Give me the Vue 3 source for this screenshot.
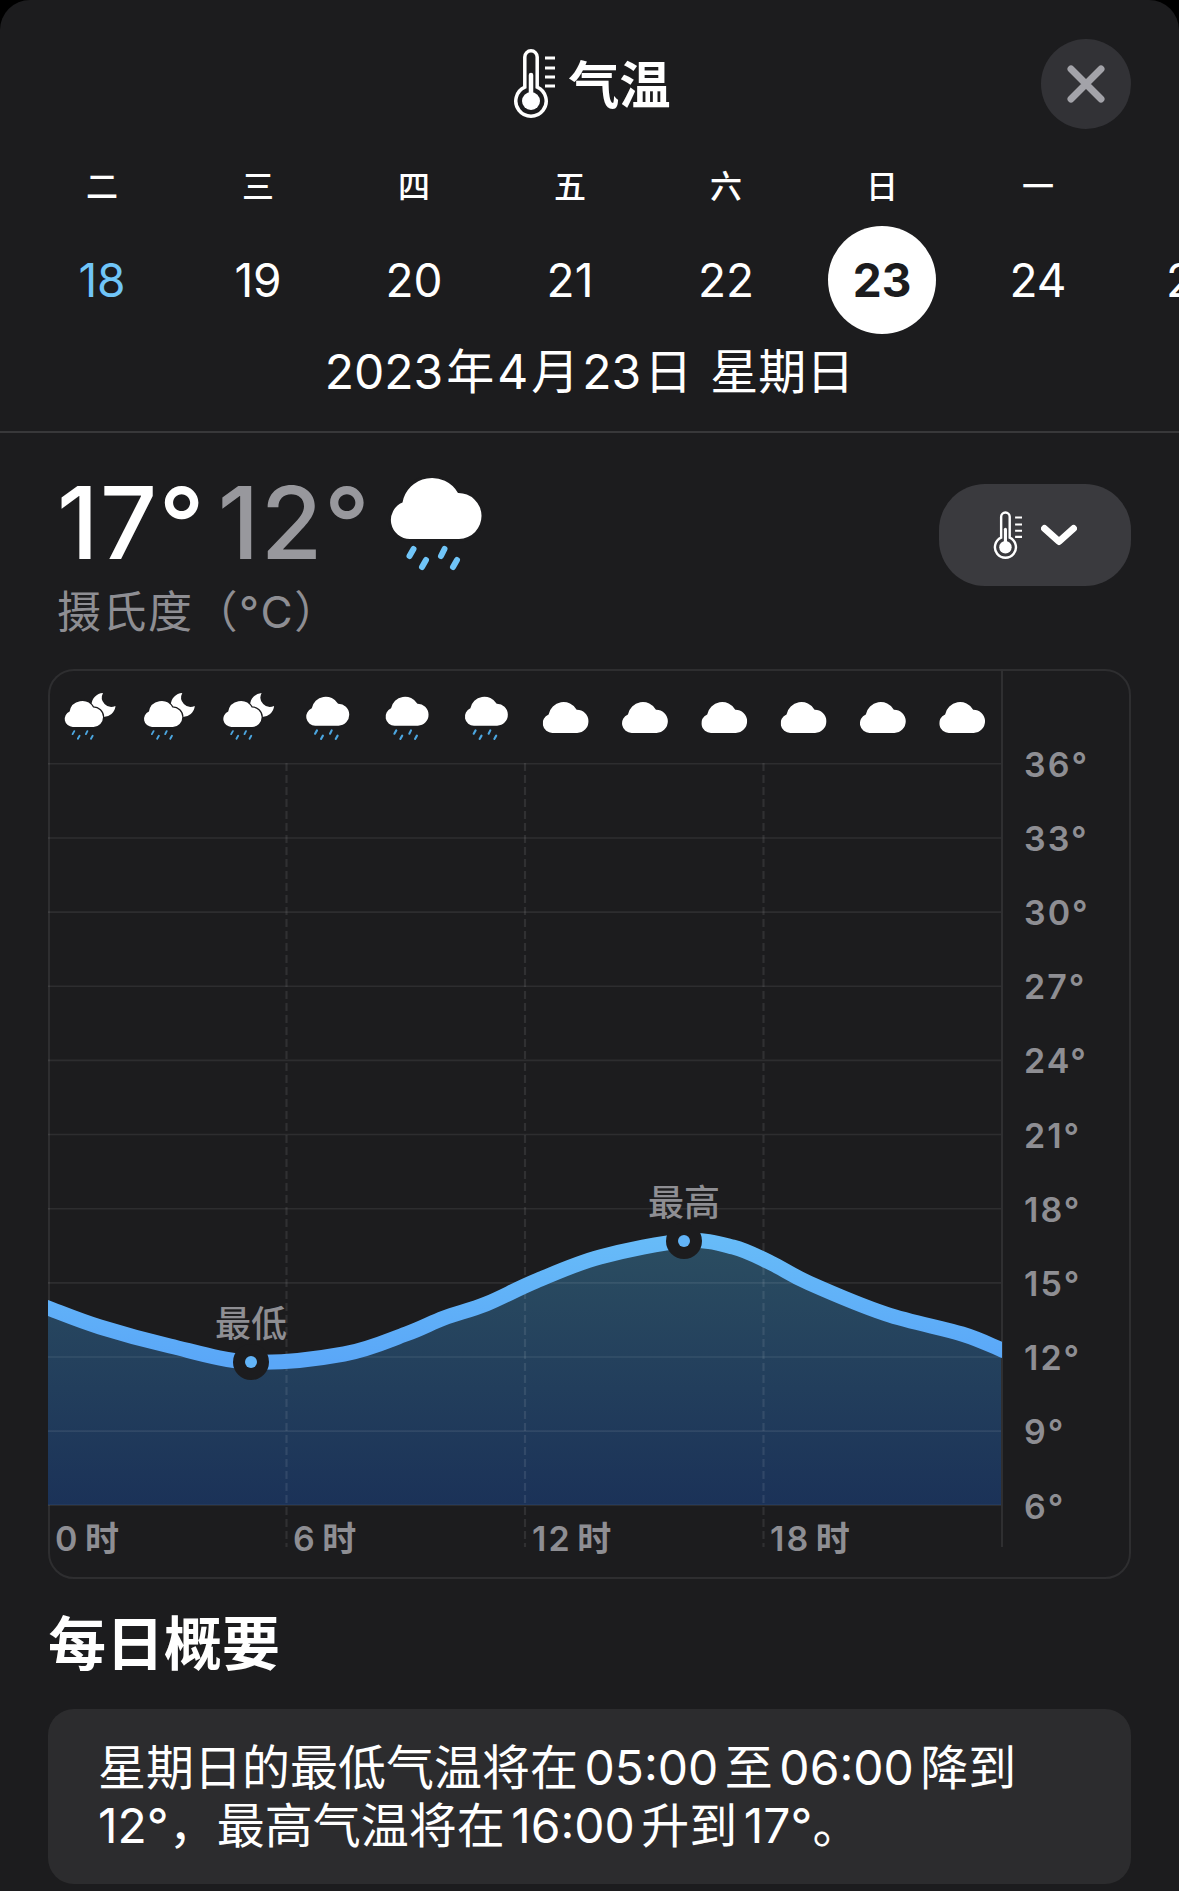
<template>
  <div class="sheet">
    <svg class="defs" width="0" height="0" aria-hidden="true">
      <defs>
        <symbol id="thermo" viewBox="0 0 42 70">
          <path d="M11.8 38.1V8a6.2 6.2 0 0 1 12.4 0V38.1A15.2 15.2 0 1 1 11.8 38.1Z" fill="none" stroke="#fff" stroke-width="3.5" />
          <path d="M18 26V52" stroke="#fff" stroke-width="4.5" stroke-linecap="round" />
          <circle cx="18" cy="52" r="9" fill="#fff" />
          <path d="M32 9H42M32 19H42M32 28H42M32 37H42" stroke="#fff" stroke-width="3" />
        </symbol>
        <symbol id="cloud" viewBox="0 0 91 61">
          <path :d="cloudPath" fill="#fff" />
        </symbol>
        <symbol id="rain" viewBox="-3 -3 97 100">
          <g stroke="currentColor" stroke-linecap="round">
            <path d="M22.5 71L18.5 78M35 82L31 89M53.5 71L50 78M66 82L62 89" fill="none" />
          </g>
          <path :d="cloudPath" fill="#fff" stroke="#1c1c1e" stroke-width="6" paint-order="stroke" />
        </symbol>
      </defs>
    </svg>

    <header class="top">
      <div class="top-bar">
        <div class="title">
          <svg class="title-icon"><use href="#thermo" /></svg>
          <span>气温</span>
        </div>
        <button class="close" type="button">
          <svg width="38" height="38" viewBox="0 0 38 38">
            <path d="M4 4L34 34M34 4L4 34" stroke="#a3a3a9" stroke-width="7" stroke-linecap="round" />
          </svg>
        </button>
      </div>

      <div class="week">
        <span v-for="(d, i) in weekdays" :key="i" class="weekday">{{ d }}</span>
      </div>
      <div class="week days">
        <div
          v-for="d in days"
          :key="d"
          class="day"
          :class="{ today: d === 18, selected: d === 23 }"
        >
          <span>{{ d }}</span>
        </div>
      </div>
      <div class="date">2023 年 4 月 23 日<span class="date-week">星期日</span></div>
    </header>

    <main class="content">
      <div class="summary-row">
        <div>
          <div class="temps">
            <span class="high">17°</span>
            <span class="low">12°</span>
            <svg class="big-icon" style="color: #70c5f8"><use href="#rain" stroke-width="6" /></svg>
          </div>
          <div class="unit">摄氏度（°C）</div>
        </div>
        <button class="picker" type="button">
          <svg class="picker-icon"><use href="#thermo" /></svg>
          <svg width="36" height="22" viewBox="0 0 36 22">
            <path d="M3.5 4.5L18 17.5L32.5 4.5" fill="none" stroke="#fff" stroke-width="7" stroke-linecap="round" stroke-linejoin="round" />
          </svg>
        </button>
      </div>

      <div class="chart-card">
        <svg class="chart" width="1079" height="906" viewBox="50 671 1079 906">
          <defs>
            <linearGradient id="area" gradientUnits="userSpaceOnUse" x1="0" y1="1241" x2="0" y2="1505">
              <stop offset="0" stop-color="#2b4d61" />
              <stop offset="1" stop-color="#1b3258" />
            </linearGradient>
            <linearGradient id="line" gradientUnits="userSpaceOnUse" x1="0" y1="1241" x2="0" y2="1362">
              <stop offset="0" stop-color="#67bbf8" />
              <stop offset="1" stop-color="#5aa7f8" />
            </linearGradient>
            <clipPath id="plot"><rect x="48" y="671" width="954" height="900" /></clipPath>
          </defs>

          <g v-for="(h, i) in hours" :key="i">
            <template v-if="h === 'cloud'">
              <use href="#cloud" :x="iconX(i) - 23" y="702" width="46" height="31" />
            </template>
            <template v-else>
              <path
                v-if="h === 'moon'"
                :transform="`translate(${iconX(i) - 25} 693)`"
                d="M38 0A12 12 0 1 0 50.5 13A9.5 9.5 0 0 1 38 0Z"
                fill="#fff"
              />
              <use
                href="#rain"
                class="small-rain"
                :x="h === 'moon' ? iconX(i) - 26.5 : iconX(i) - 23"
                :y="h === 'moon' ? 699.5 : 695"
                :width="h === 'moon' ? 41 : 46"
                :height="h === 'moon' ? 43 : 48"
                stroke-width="4.5"
              />
            </template>
          </g>

          <path :d="areaPath" fill="url(#area)" />
          <line v-for="y in gridY" :key="y" x1="48" :x2="1002" :y1="y" :y2="y" class="grid" />
          <line v-for="x in gridX" :key="x" :x1="x" :x2="x" y1="763" y2="1547" class="dash" />
          <line x1="1002" x2="1002" y1="669" y2="1547" class="axis" />
          <g clip-path="url(#plot)">
            <path :d="linePath" fill="none" stroke="url(#line)" stroke-width="15" />
          </g>

          <g v-for="m in markers" :key="m.label">
            <circle :cx="m.x" :cy="m.y" r="18" fill="#1c1c1e" />
            <circle :cx="m.x" :cy="m.y" r="6" fill="#62b4f8" />
            <text :x="m.x" :y="m.textY" text-anchor="middle" class="mark-label">{{ m.label }}</text>
          </g>

          <text v-for="t in times" :key="t.label" :x="t.x" y="1551" class="time-label">{{ t.label }}</text>
          <text v-for="(l, i) in tempLabels" :key="l" x="1024" :y="776.5 + i * 74.2" class="temp-label">{{ l }}°</text>
        </svg>
      </div>

      <h2 class="section">每日概要</h2>
      <div class="note">
        <div>星期日的最低气温将在 05:00 至 06:00 降到</div>
        <div>12°，最高气温将在 16:00 升到 17°。</div>
      </div>
    </main>
  </div>
</template>

<script setup>
const weekdays = ['二', '三', '四', '五', '六', '日', '一', '二']
const days = [18, 19, 20, 21, 22, 23, 24, 25]

const cloudPath = 'M19 61A19 19 0 0 1 11.5 24.5A30 30 0 0 1 67 15A23 23 0 1 1 68 61Z'
const hours = ['moon', 'moon', 'moon', 'rain', 'rain', 'rain', 'cloud', 'cloud', 'cloud', 'cloud', 'cloud', 'cloud']
const iconX = (i) => 90 + i * 79.3

const gridY = Array.from({ length: 11 }, (_, i) => 763.8 + i * 74.15)
const gridX = [286.5, 525, 763.5]
const tempLabels = [36, 33, 30, 27, 24, 21, 18, 15, 12, 9, 6]

const times = [
  { label: '0 时', x: 55 },
  { label: '6 时', x: 293 },
  { label: '12 时', x: 532 },
  { label: '18 时', x: 770 }
]
const markers = [
  { label: '最低', x: 251, y: 1362, textY: 1337 },
  { label: '最高', x: 684, y: 1241, textY: 1216 }
]

// sampled from the curve, ends run past the plot and get clipped
const pts = [
  [20, 1297], [48, 1308], [100, 1327], [170, 1346], [251, 1362], [344, 1354], [406, 1334],
  [444, 1318], [486, 1304], [536, 1281], [600, 1257], [684, 1241], [733, 1247],
  [771, 1263], [809, 1283], [886, 1314], [962, 1334], [1002, 1350], [1030, 1362]
]

function smooth(p) {
  let d = `M${p[0][0]} ${p[0][1]}`
  for (let i = 0; i < p.length - 1; i++) {
    const a = p[i - 1] || p[i]
    const b = p[i]
    const c = p[i + 1]
    const e = p[i + 2] || c
    const c1 = [b[0] + (c[0] - a[0]) / 6, b[1] + (c[1] - a[1]) / 6]
    const c2 = [c[0] - (e[0] - b[0]) / 6, c[1] - (e[1] - b[1]) / 6]
    d += `C${c1[0]} ${c1[1]} ${c2[0]} ${c2[1]} ${c[0]} ${c[1]}`
  }
  return d
}

const inner = pts.slice(1, -1)
const linePath = smooth(pts)
const areaPath = smooth(inner) + 'L1002 1505L48 1505Z'
</script>

<style>
html, body {
  background: #000;
}
</style>

<style scoped>
.sheet {
  width: 1179px;
  height: 1891px;
  overflow: hidden;
  background: #1c1c1e;
  border-radius: 30px 30px 0 0;
  color: #fff;
  font-family: Inter, "Noto Sans CJK SC", sans-serif;
}

.defs {
  position: absolute;
}

.top {
  padding-top: 39px;
  padding-bottom: 31px;
  border-bottom: 2px solid #38383a;
}

.top-bar {
  display: grid;
  grid-template-columns: 1fr auto 1fr;
  align-items: center;
  height: 90px;
  padding-right: 48px;
}

.title {
  grid-column: 2;
  display: flex;
  align-items: center;
  gap: 13px;
  padding-left: 53px;
  font-size: 51px;
  font-weight: 600;
}

.title span {
  padding-bottom: 4px;
}

.title-icon {
  width: 42px;
  height: 70px;
}

.close {
  grid-column: 3;
  justify-self: end;
  display: flex;
  align-items: center;
  justify-content: center;
  width: 90px;
  height: 90px;
  padding: 0;
  border: none;
  border-radius: 50%;
  background: #323236;
}

.week {
  display: grid;
  grid-template-columns: repeat(8, 156px);
  padding-left: 24px;
  margin-top: 36px;
  text-align: center;
}

.weekday {
  font-size: 32px;
  font-weight: 500;
  line-height: 44px;
}

.days {
  margin-top: 17px;
}

.day {
  display: flex;
  align-items: center;
  justify-content: center;
  height: 108px;
  font-size: 46px;
}

.day.today {
  color: #70c5f8;
}

.day.selected span {
  display: flex;
  align-items: center;
  justify-content: center;
  width: 108px;
  height: 108px;
  border-radius: 50%;
  background: #fff;
  color: #1c1c1e;
  font-weight: 700;
}

.date {
  margin-top: 10px;
  font-size: 48px;
  line-height: 56px;
  text-align: center;
  word-spacing: -10.5px;
}

.date-week {
  margin-left: 18px;
}

.content {
  padding: 0 48px;
}

.summary-row {
  display: flex;
  justify-content: space-between;
  align-items: flex-start;
}

.temps {
  display: flex;
  align-items: center;
  gap: 12px;
  height: 100px;
  margin-top: 40px;
  padding-left: 9px;
  font-size: 100px;
  font-weight: 500;
  line-height: 100px;
  letter-spacing: 1.5px;
}

.low {
  color: #98989d;
}

.big-icon {
  width: 97px;
  height: 100px;
  margin-top: 3px;
  margin-left: 5px;
}

.unit {
  margin-top: 14px;
  padding-left: 9px;
  color: #8e8e93;
  font-size: 44px;
  line-height: 50px;
  letter-spacing: 1.5px;
}

.picker {
  display: flex;
  align-items: center;
  justify-content: center;
  gap: 19px;
  width: 192px;
  height: 102px;
  margin-top: 51px;
  padding: 0;
  border: none;
  border-radius: 46px;
  background: #3a3a3e;
}

.picker-icon {
  width: 29px;
  height: 49px;
}

.chart-card {
  box-sizing: border-box;
  width: 1083px;
  height: 910px;
  margin-top: 32px;
  border: 2px solid #2e2e30;
  border-radius: 26px;
}

.chart {
  display: block;
  overflow: visible;
}

.small-rain {
  color: #4ba6e0;
}

.grid {
  stroke: rgba(255, 255, 255, 0.08);
  stroke-width: 1.6;
}

.dash {
  stroke: rgba(255, 255, 255, 0.09);
  stroke-width: 2.2;
  stroke-dasharray: 8 4;
}

.axis {
  stroke: #2f2f31;
  stroke-width: 2;
}

.mark-label {
  fill: #8e8e93;
  font-size: 36px;
  font-weight: 500;
}

.time-label {
  fill: #8e8e93;
  font-size: 34px;
  font-weight: 600;
  letter-spacing: 2px;
  word-spacing: -5px;
}

.temp-label {
  fill: #8e8e93;
  font-size: 34px;
  font-weight: 600;
  letter-spacing: 2px;
}

.section {
  margin: 30px 0 0;
  font-size: 58px;
  font-weight: 700;
  line-height: 70px;
}

.note {
  box-sizing: border-box;
  height: 175px;
  margin-top: 30px;
  padding: 30px 50px;
  border-radius: 26px;
  background: #2c2c2e;
  font-size: 48px;
  line-height: 58px;
  word-spacing: -7px;
  white-space: nowrap;
}
</style>
